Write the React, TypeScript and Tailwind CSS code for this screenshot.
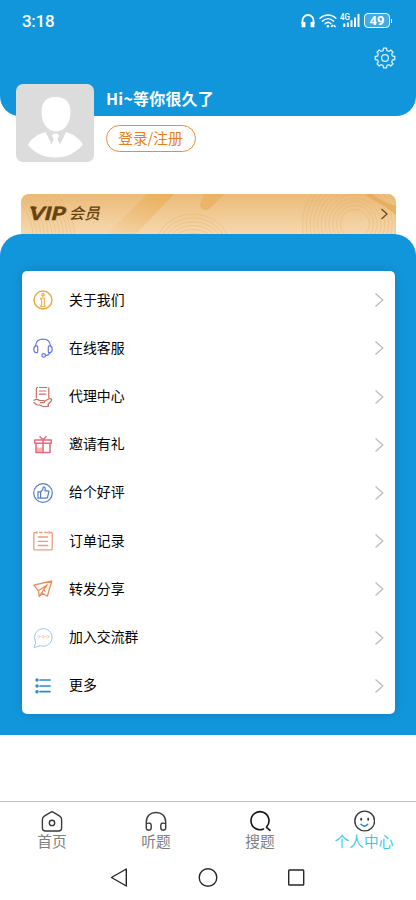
import type { ReactNode } from "react";

type MenuItem = {
  label: string;
  icon: ReactNode;
};

type TabItem = {
  label: string;
  icon: ReactNode;
  active?: boolean;
};

// outline of the settings gear: 8 teeth around the centre of a 22x22 box
const gearPath = () => {
  const points: string[] = [];
  for (let i = 0; i < 8; i++) {
    const base = i * 45 - 90;
    [
      [-16, 7.7],
      [-12, 8.3],
      [-9, 9.9],
      [9, 9.9],
      [12, 8.3],
      [16, 7.7],
    ].forEach(([offset, radius]) => {
      const angle = ((base + offset) * Math.PI) / 180;
      points.push(`${(11 + radius * Math.cos(angle)).toFixed(2)} ${(11 + radius * Math.sin(angle)).toFixed(2)}`);
    });
  }
  return `M${points.join("L")}Z`;
};

const iconProps = {
  width: 20,
  height: 20,
  viewBox: "0 0 20 20",
  fill: "none",
  strokeWidth: 1.2,
  strokeLinecap: "round" as const,
  strokeLinejoin: "round" as const,
};

const menuItems: MenuItem[] = [
  {
    label: "关于我们",
    icon: (
      <svg {...iconProps} stroke="#eaa63c">
        <circle cx="10" cy="10" r="9" strokeWidth="1.4" />
        <circle cx="10" cy="4.9" r="1.2" />
        <path d="M8 8h3.300v7.200h.9v1.500H7.800v-1.500h.9V9.300H8z" strokeWidth="1" />
      </svg>
    ),
  },
  {
    label: "在线客服",
    icon: (
      <svg {...iconProps} stroke="#6478df">
        <path d="M2.500 7.700C3 3.700 6 1.200 10 1.200s7 2.500 7.500 6.500M17 14.700c-.8 1.800-2.300 2.800-4.500 2.900" />
        <path d="M3 7.800h.8q.9 0 .9.900v5q0 .9-.9.900H3q-2.200-.5-2.200-3.400T3 7.800zM17 7.800h-.8q-.9 0-.9.900v5q0 .9.900.9h.8q2.200-.5 2.200-3.400T17 7.800z" />
        <circle cx="10.700" cy="17.400" r="1.800" />
      </svg>
    ),
  },
  {
    label: "代理中心",
    icon: (
      <svg {...iconProps} stroke="#cf6b60">
        <path d="M3.300 11V2c0-.9.500-1.500 1.200-1.500M6.500.5h7M15.800.8V10.800M6.500 4h6.300M6.500 7.200h6.300" />
        <path d="M1 13.300c2-1.400 4-1 5.500.2h4c1.500 0 1.700 2 0 2.200H7.500M12 14l3.500-2c2-1.200 4 .4 2.700 2L15 17.500l.5 1.800c-2.500.5-4.500.4-6.500-.3l-2.500-1H4L1 15.500" />
      </svg>
    ),
  },
  {
    label: "邀请有礼",
    icon: (
      <svg {...iconProps} stroke="#e5677f" strokeWidth="1.500">
        <path d="M4 12.500h5.500v5H4z" fill="#f8b6a8" stroke="none" />
        <path d="M1.800 5h16.400v3.300H1.800zM3 8.300v9.300h14V8.300M10 5v12.500M7 1.800 10 4.700l3-2.900" />
      </svg>
    ),
  },
  {
    label: "给个好评",
    icon: (
      <svg {...iconProps} stroke="#547dba">
        <circle cx="10" cy="10" r="9.300" />
        <path d="M5 8.800h2.600v6.400H5zM7.600 9l2.200-2.300.4-2.600c1.900-.5 2.600 1.100 1.700 3.700h2.900c.8 0 1.200.5 1 1.200l-1.200 5c-.2.800-.6 1.200-1.300 1.200H7.600" />
      </svg>
    ),
  },
  {
    label: "订单记录",
    icon: (
      <svg {...iconProps} stroke="#eb9d7b" strokeWidth="1.300">
        <path d="M3 1.500H1.800Q.8 1.500.8 2.500v15.200q0 1.200 1.200 1.200h16q1.200 0 1.200-1.200V2.500q0-1-1-1H17M6.500 1.500H9M11.800 1.500h2.500M4 .7v1.600M16 .7v1.600" />
        <path d="M5.300 6h9.400M5.300 10.300h9.400M5.300 14.500h9.400" />
      </svg>
    ),
  },
  {
    label: "转发分享",
    icon: (
      <svg {...iconProps} stroke="#eb8c5a" strokeWidth="1.300">
        <path d="M.8 6.200 18.800 2l-4.500 15.200-4.700-3-3.400 3.300-.7-5.700zM5.500 11.800l8.700-6-5.400 7.700M6.200 17.500l2.600-4M10.500 10.200l1.500 2" />
      </svg>
    ),
  },
  {
    label: "加入交流群",
    icon: (
      <svg {...iconProps} stroke="#9fc5e6" strokeWidth="1">
        <path d="M2.600 13.700A8.800 8.800 0 1 1 7.300 17.700L1.500 19.500z" />
        <g stroke="#edd2a5" strokeWidth=".9">
          <circle cx="5.700" cy="8.700" r="1.200" />
          <circle cx="10.200" cy="8.700" r="1.200" />
          <circle cx="14.700" cy="8.700" r="1.200" />
        </g>
      </svg>
    ),
  },
  {
    label: "更多",
    icon: (
      <svg {...iconProps} stroke="#268fd0" strokeWidth="1.700">
        <path d="M7 4h10M7 10h10M7 15.700h10" />
        <g fill="#268fd0" stroke="none">
          <circle cx="4" cy="4" r="1.700" />
          <circle cx="4" cy="10" r="1.700" />
          <circle cx="4" cy="15.700" r="1.700" />
        </g>
      </svg>
    ),
  },
];

const tabIconProps = {
  width: 22,
  height: 22,
  viewBox: "0 0 22 22",
  fill: "none",
  stroke: "#3a3a3a",
  strokeWidth: 1.4,
  strokeLinecap: "round" as const,
  strokeLinejoin: "round" as const,
};

const tabs: TabItem[] = [
  {
    label: "首页",
    icon: (
      <svg {...tabIconProps}>
        <path d="M9.500 2.300q1.500-1 3 0l6.200 3.900q1.900 1.300 1.900 3.300v8.300q0 3.200-3.200 3.200H4.600q-3.200 0-3.200-3.200V9.500q0-2 1.900-3.300z" />
        <circle cx="11" cy="12.900" r="2.700" />
      </svg>
    ),
  },
  {
    label: "听题",
    icon: (
      <svg {...tabIconProps}>
        <path d="M1.300 17.500V12C1.300 6 5.300 2.500 11 2.500S20.700 6 20.700 12v5.500M1.300 13.700c3-1.300 4.900-.4 4.900 1.500v2.500c0 3.200-4.900 3.300-4.900.3zM20.700 13.700c-3-1.300-4.900-.4-4.900 1.500v2.500c0 3.200 4.900 3.300 4.900.3z" />
      </svg>
    ),
  },
  {
    label: "搜题",
    icon: (
      <svg {...tabIconProps} stroke="#151515" strokeWidth="1.600">
        <path d="M14.500 19A9 9 0 1 1 17.700 16.700M17.500 17.300 21 20.300" />
      </svg>
    ),
  },
  {
    label: "个人中心",
    active: true,
    icon: (
      <svg {...tabIconProps}>
        <circle cx="11.700" cy="11" r="9.900" />
        <path d="M8.200 8.800v1M15.200 8.800v1" strokeWidth="1.900" />
        <path d="M8 14.300q3.500 3.700 6.700 0" stroke="#2687ce" strokeWidth="1.600" />
      </svg>
    ),
  },
];

function StatusBar() {
  return (
    <div className="flex h-[41px] items-center justify-between pr-6 pl-[22px] text-white">
      <span className="font-[Roboto] text-[17px] leading-5 font-medium tracking-[-0.3px]">3:18</span>
      <div className="flex items-center">
        <svg width="15" height="14" viewBox="0 0 15 14" fill="none" stroke="white" className="mr-[3px]">
          <path d="M1.500 10V6.500a5.500 5.500 0 0 1 11 0V10" strokeWidth="1.800" />
          <path d="M2.500 8v5.200M11.500 8v5.200" strokeWidth="3.800" />
        </svg>
        <svg width="18" height="14" viewBox="0 0 18 14" fill="none" stroke="white" strokeWidth="1.500" strokeLinecap="round" className="mr-[3px]">
          <path d="M1 4.200c4.500-4.400 11.600-4.400 15.800 0M3.500 7.100c3.400-3.200 7.800-3.200 10.900 0M6.100 9.700c2-1.600 4.300-1.600 5.900 0" />
          <circle cx="8.900" cy="12.300" r="1.300" fill="white" stroke="none" />
          <path d="m12.700 12.400.9-.9M15.300 11.700l.7.800" strokeWidth="1.700" />
        </svg>
        <svg width="21" height="15" viewBox="0 0 21 15" fill="white" className="mr-[3px]">
          <text x="0" y="7" fontSize="9" fontWeight="500" fontFamily="Roboto, sans-serif" textLength="10" lengthAdjust="spacingAndGlyphs">
            4G
          </text>
          <path d="M3.300 10.500h2V14h-2zM6.900 9.500h2V14h-2zM10.500 7.300h2V14h-2zM14 4.500h2V14h-2zM17.500 1h2v13h-2z" />
        </svg>
        <div className="flex h-[15px] w-[26px] items-center justify-center rounded-[4px] border border-white bg-white/20 font-[Roboto] text-[13px] leading-none font-bold">
          49
        </div>
        <div className="ml-px h-1 w-px bg-white" />
      </div>
    </div>
  );
}

function Avatar() {
  return (
    <div className="size-[78px] shrink-0 overflow-hidden rounded-[7px] bg-[#dcdcdc]">
      <svg width="78" height="78" viewBox="0 0 78 78" fill="white">
        <path d="M39.500 13C49 13 54.500 18 54.500 27.500 54.500 39 48.500 47.500 40 47.500S25.500 39 25.500 27.500C25.500 18 30.500 13 39.500 13z" />
        <path d="M29.500 48 35.700 60.500 37.600 55.200 36 51.500 37.500 49.800H41.500L43 51.500 41.500 55.200 44 60.500 50 48C57.500 50.500 63 54 66.800 60.500 60 69 50.500 73.500 39.500 73.500S17.500 69 11.800 60.500C16 54 21.500 50.500 29.500 48z" />
      </svg>
    </div>
  );
}

function VipBanner() {
  const rings = Array.from({ length: 13 }, (_, i) => 7 + i * 3.8);

  return (
    <div className="mt-8 mr-5 ml-[21px] h-[41px] shrink-0 overflow-hidden rounded-t-lg">
      <svg width="375" height="41" viewBox="0 0 375 41">
        <defs>
          <linearGradient id="vipGold" x1="0" y1="0" x2="0" y2="1">
            <stop offset="0" stopColor="#ebbb79" />
            <stop offset="1" stopColor="#f6d9af" />
          </linearGradient>
          <linearGradient id="vipStripe" x1="1" y1="0" x2="0" y2="1">
            <stop offset="0" stopColor="#e9a94f" stopOpacity=".75" />
            <stop offset="1" stopColor="#efbd77" stopOpacity=".1" />
          </linearGradient>
        </defs>
        <rect width="375" height="41" fill="url(#vipGold)" />
        <path d="M126 0h27l-39 41H85z" fill="url(#vipStripe)" />
        <path d="M183 0h21l-16 15c-5 3-11-1-8-7z" fill="#e9ae5c" opacity=".7" />
        <path d="M344 0c9 8 19 10 31 21V12C364 9 358 4 350 0z" fill="#e5a344" opacity=".6" />
        <g fill="none" stroke="#dfa45a" strokeOpacity=".38" strokeWidth=".8">
          {rings.slice(2).map((r) => (
            <circle key={r} cx="334" cy="30" r={r} />
          ))}
          {rings.slice(0, 7).map((r) => (
            <ellipse key={r} cx="172" cy="50" rx={r + 6} ry={r} />
          ))}
          {rings.slice(0, 12).map((r) => (
            <path key={r} d={`M${r - 12} 0C${r - 5} 14 ${r + 4} 22 ${r + 5} 41`} />
          ))}
        </g>
        <g fill="#68420f" transform="translate(0 26) skewX(-14)">
          <text
            x="7"
            y="0"
            fontSize="18.500"
            fontWeight="900"
            fontFamily="Lato, sans-serif"
            stroke="#68420f"
            strokeWidth=".4"
            textLength="36"
            lengthAdjust="spacingAndGlyphs"
          >
            VIP
          </text>
          <path d="M5.500-13.300h7v2.300h-5z" />
          <text x="47.500" y="-1" fontSize="15.500" fontWeight="500" fontFamily="'Noto Sans CJK SC', sans-serif" textLength="31" lengthAdjust="spacingAndGlyphs">
            会员
          </text>
        </g>
        <path d="m360.500 15 5.500 5-5.500 5" fill="none" stroke="#684b24" strokeWidth="1.300" />
      </svg>
    </div>
  );
}

function MenuRow({ label, icon }: MenuItem) {
  return (
    <button type="button" className="flex flex-1 items-center pr-[10px] pl-[11px] text-left">
      {icon}
      <span className="ml-4 flex-1 pb-[3px] text-[13.900px] leading-5 text-black">{label}</span>
      <svg width="12" height="16" viewBox="0 0 12 16" fill="none" stroke="#bdbdbd" strokeWidth="1.300">
        <path d="M2.500 1.500 9.800 8l-7.300 6.500" />
      </svg>
    </button>
  );
}

export default function App() {
  return (
    <div className="flex h-[900px] w-full flex-col bg-white font-['Noto_Sans_CJK_SC',sans-serif]">
      <header className="h-[116px] shrink-0 rounded-b-[20px] bg-[#1296db]">
        <StatusBar />
        <div className="flex justify-end pt-[6px] pr-[20px]">
          <svg width="22" height="22" viewBox="0 0 22 22" fill="none" stroke="#d9effb" strokeWidth="1.300" strokeLinejoin="round">
            <path d={gearPath()} />
            <circle cx="11" cy="11" r="3.400" />
          </svg>
        </div>
      </header>

      <section className="-mt-8 flex h-[78px] shrink-0 pl-4">
        <Avatar />
        <div className="ml-3 flex flex-col items-start">
          <h1 className="mt-[2px] text-[16px] leading-6 font-bold tracking-[0.200px] text-white">Hi~等你很久了</h1>
          <button
            type="button"
            className="mt-[15px] flex h-[27px] w-[90px] items-center justify-center rounded-full border-[1.500px] border-[#e98d31] pr-px text-[14.700px] leading-none text-[#e77f1c]"
          >
            登录/注册
          </button>
        </div>
      </section>

      <VipBanner />

      <main className="-mt-px h-[501px] shrink-0 rounded-t-[22px] bg-[#1296db] pt-[37px] pr-[21px] pl-[22px]">
        <div className="flex h-[443px] flex-col rounded-[5px] bg-white pt-[5px] pb-1 shadow-[0_0_12px_rgba(0,0,0,0.14)]">
          {menuItems.map((item) => (
            <MenuRow key={item.label} {...item} />
          ))}
        </div>
      </main>

      <nav className="mt-auto grid h-[52px] shrink-0 grid-cols-4 border-t border-[#bcbcbc]">
        {tabs.map((tab) => (
          <button key={tab.label} type="button" className="flex flex-col items-center pt-2">
            {tab.icon}
            <span className={`-mt-px text-[14.700px] leading-5 ${tab.active ? "text-[#3bcbe8]" : "text-[#808080]"}`}>{tab.label}</span>
          </button>
        ))}
      </nav>

      {/* system navigation: back, home, recents */}
      <div className="flex h-[47px] shrink-0 items-start justify-center gap-[68px] pt-[14px]">
        <svg width="20" height="20" viewBox="0 0 20 20" fill="none" stroke="#262626" strokeWidth="1.400" strokeLinejoin="round">
          <path d="M16.300 2v17L1.500 10.500z" />
        </svg>
        <svg width="20" height="20" viewBox="0 0 20 20" fill="none" stroke="#262626" strokeWidth="1.400">
          <circle cx="10" cy="10.500" r="8.800" />
        </svg>
        <svg width="20" height="20" viewBox="0 0 20 20" fill="none" stroke="#262626" strokeWidth="1.400">
          <rect x="2.700" y="3" width="15" height="15" rx=".8" />
        </svg>
      </div>
    </div>
  );
}
